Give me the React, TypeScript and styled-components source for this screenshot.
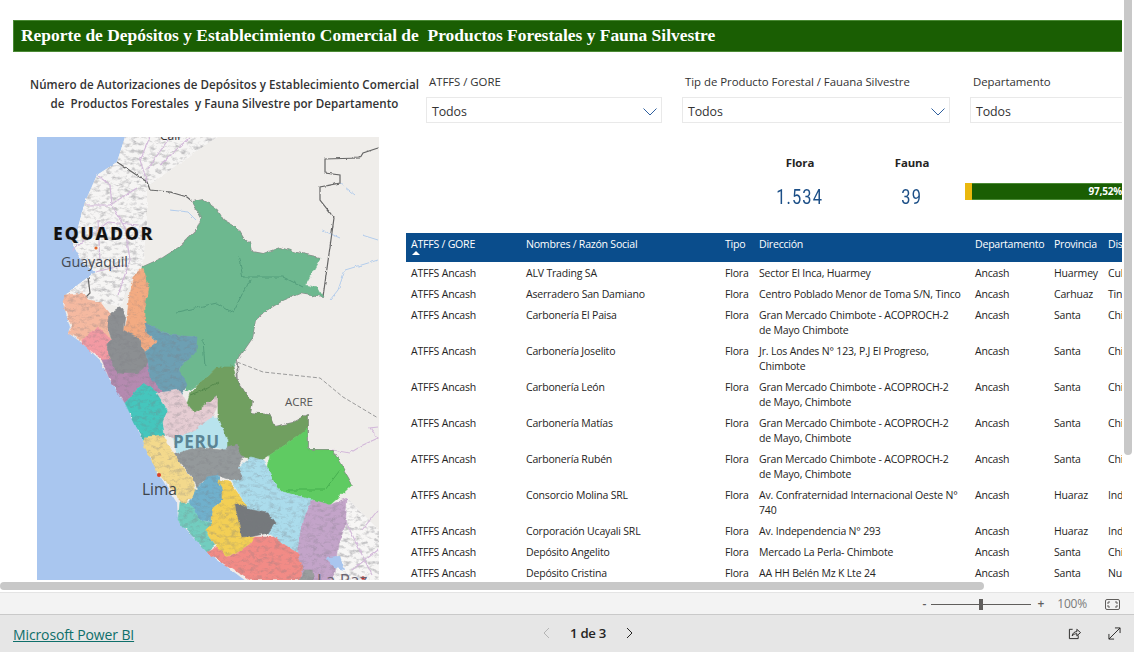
import React from "react";
import styled, { createGlobalStyle } from "styled-components";

const Global = createGlobalStyle`
  html, body { margin: 0; padding: 0; background: #fff; overflow: hidden; }
  * { box-sizing: border-box; }
`;
const UI = `"Open Sans", "Noto Sans", sans-serif`;

const Shell = styled.div`
  width: 1134px; height: 652px; display: flex; flex-direction: column; overflow: hidden;
  font-family: ${UI}; color: #252423;
`;
const Viewport = styled.main`
  position: relative; height: 592px; flex: none; overflow: hidden; background: #fff;
`;
const Canvas = styled.div`
  width: 1122px; height: 580px; margin-left: 13px; padding-top: 20px; overflow: hidden;
  display: flex; flex-direction: column;
`;
const TitleBar = styled.h1`
  margin: 0; height: 32px; flex: none; display: flex; align-items: center; padding-left: 7px; width: 1109px;
  background: #1a5e03; border: 1px solid #4a8a35; border-width: 1px 0 1px 1px;
  color: #fff; font: bold 17.45px/1 "Liberation Serif", serif; white-space: pre;
`;
const Body = styled.div`
  flex: 1; min-height: 0; display: grid; grid-template-columns: 393px 716px;
`;
const LeftColumn = styled.section`
  display: flex; flex-direction: column; min-height: 0;
`;
const MapCaption = styled.h2`
  margin: 23px 0 0 14px; width: 395px; height: 62px; text-align: center; white-space: pre; flex: none;
  font: 600 11.6px/19px ${UI}; color: #333; letter-spacing: 0.05px;
`;
const MapFrame = styled.svg`
  display: block; width: 342px; height: 443px; margin-left: 24px; flex: none;
`;
const RightColumn = styled.section`
  display: flex; flex-direction: column; min-width: 0; overflow: hidden;
`;
const Filters = styled.div`
  display: grid; grid-template-columns: 236px 268px 200px; column-gap: 20px; padding: 21px 0 0 20px; height: 71px; width: 760px; flex: none;
`;
const Filter = styled.div`
  display: flex; flex-direction: column;
`;
const FilterLabel = styled.label<{ $inset: number }>`
  font: 11.4px/18px ${UI}; color: #333; height: 24px; padding-left: ${(p) => p.$inset}px; letter-spacing: -0.03px; white-space: nowrap;
`;
const FilterBox = styled.div`
  height: 26px; border: 1px solid #e9e9e9; display: flex; align-items: center; justify-content: space-between;
  padding: 4px 4px 0 5px; font: 12.4px/16px ${UI}; color: #333; letter-spacing: -0.1px;
`;
const Kpis = styled.div`
  height: 110px; display: flex; width: 760px; flex: none;
`;
const Kpi = styled.div<{ $ml: number }>`
  width: 80px; flex: none; margin-left: ${(p) => p.$ml}px; text-align: center; padding-top: 32px;
`;
const KpiLabel = styled.div`
  font: 700 11.4px/16px ${UI}; color: #252423; letter-spacing: -0.1px;
`;
const KpiValue = styled.div`
  margin-top: 14px; display: inline-block; transform: scaleX(0.82);
  font: 400 20px/24px "Roboto", ${UI}; color: #1c4f87; letter-spacing: 1.4px;
`;
const Gauge = styled.div`
  margin: 60px 0 0 13px; height: 17px; width: 200px; display: flex; flex: none;
`;
const GaugeFlora = styled.div`
  width: 7px; background: #eab80e;
`;
const GaugeFauna = styled.div`
  width: 150px; background: #1a5e03; border-top: 1px solid #4a8a35; border-bottom: 1px solid #4a8a35;
  color: #fff; font: 700 10px/15px ${UI}; text-align: right; white-space: nowrap; letter-spacing: -0.2px;
`;
const Table = styled.div`
  width: 760px; display: flex; flex-direction: column;
`;
const cols = "115px 199px 34px 216px 79px 54px 63px";
const HeadRow = styled.div`
  display: grid; grid-template-columns: ${cols}; height: 29px; background: #0a4d8c; color: #fff;
  font: 10.6px/15px ${UI}; letter-spacing: -0.25px;
`;
const HeadCell = styled.div`
  padding: 4px 0 0 5px; white-space: nowrap; overflow: hidden;
`;
const SortArrow = styled.div`
  width: 0; height: 0; margin: -1px 0 0 1px; border-left: 4px solid transparent; border-right: 4px solid transparent; border-bottom: 4px solid #fff;
`;
const Row = styled.div`
  display: grid; grid-template-columns: ${cols}; font: 10.5px/15px ${UI}; color: #252423; letter-spacing: -0.18px;
`;
const Cell = styled.div`
  padding: 4px 0 2px 5px; white-space: pre; overflow: hidden;
`;
const ScrollV = styled.div`
  position: absolute; right: 2px; top: 0; width: 8px; height: 455px; background: #c8c8c8; border-radius: 0 0 4px 4px;
`;
const ScrollH = styled.div`
  position: absolute; left: 0; top: 582px; width: 984px; height: 8px; background: #c8c8c8; border-radius: 4px;
`;
const ZoomBar = styled.div`
  height: 23px; flex: none; background: #f3f3f3; border-bottom: 1px solid #c9c9c9; border-top: 1px solid #e4e4e4;
  display: flex; align-items: center; justify-content: flex-end; padding: 1px 14px 0 0; color: #605e5c; font: 12px/1 ${UI};
`;
const ZoomSign = styled.span<{ $ml: number }>`
  margin-left: ${(p) => p.$ml}px; font: 600 12px/1 ${UI}; color: #605e5c;
`;
const Slider = styled.div`
  position: relative; width: 100px; height: 1px; margin-left: 5px; background: #605e5c;
`;
const Thumb = styled.div`
  position: absolute; left: 48px; top: -5px; width: 4px; height: 11px; background: #605e5c;
`;
const ZoomPct = styled.span`
  margin-left: 13px; color: #7a7a7a; letter-spacing: -0.2px;
`;
const FitIcon = styled.svg`
  margin-left: 18px; display: block;
`;
const Footer = styled.footer`
  flex: 1; background: #e6e6e6; display: grid; grid-template-columns: 1fr auto 1fr; align-items: center; padding: 0 13px;
`;
const BrandLink = styled.a`
  color: #0e6f6a; text-decoration: underline; font: 14px/1 ${UI}; letter-spacing: -0.12px;
`;
const Pager = styled.nav`
  display: flex; align-items: center; gap: 20px; font: 600 13.2px/1 ${UI}; color: #252423; letter-spacing: -0.3px; margin-left: 42px;
`;
const Tools = styled.div`
  display: flex; justify-content: flex-end; gap: 27px;
`;
const MapText = styled.text<{ $size: number; $weight?: number; $ls?: number }>`
  font-family: ${UI}; font-size: ${(p) => p.$size}px; font-weight: ${(p) => p.$weight ?? 400}; letter-spacing: ${(p) => p.$ls ?? 0}px;
`;

type R = [string, string, string, string];
const rows: R[] = [
  ["ALV Trading SA", "Sector El Inca, Huarmey", "Huarmey", "Culebras"],
  ["Aserradero San Damiano", "Centro Poblado Menor de Toma S/N, Tinco", "Carhuaz", "Tinco"],
  ["Carbonería El Paisa", "Gran Mercado Chimbote - ACOPROCH-2\nde Mayo Chimbote", "Santa", "Chimbote"],
  ["Carbonería Joselito", "Jr. Los Andes N° 123, P.J El Progreso,\nChimbote", "Santa", "Chimbote"],
  ["Carbonería León", "Gran Mercado Chimbote - ACOPROCH-2\nde Mayo, Chimbote", "Santa", "Chimbote"],
  ["Carbonería Matías", "Gran Mercado Chimbote - ACOPROCH-2\nde Mayo, Chimbote", "Santa", "Chimbote"],
  ["Carbonería Rubén", "Gran Mercado Chimbote - ACOPROCH-2\nde Mayo, Chimbote", "Santa", "Chimbote"],
  ["Consorcio Molina SRL", "Av. Confraternidad Internacional Oeste N°\n740", "Huaraz", "Independencia"],
  ["Corporación Ucayali SRL", "Av. Independencia N° 293", "Huaraz", "Independencia"],
  ["Depósito Angelito", "Mercado La Perla- Chimbote", "Santa", "Chimbote"],
  ["Depósito Cristina", "AA HH Belén Mz K Lte 24", "Santa", "Nuevo Chimbote"],
];

const Chevron = () => (
  <svg width="14" height="8" viewBox="0 0 14 8" fill="none">
    <path d="M0.5 0.5 L7 7 L13.5 0.5" stroke="#2f5f9e" strokeWidth="1" />
  </svg>
);

const regions: [string, string, boolean][] = [
  ["#6db88f", "193,202 203,200 217,210 223,220 237,228 243,238 250,243 252,252 263,254 280,248 297,253 320,258 305,285 318,288 323,297 300,293 283,300 263,312 255,320 252,338 237,360 233,367 217,367 200,383 187,392 180,370 185,360 197,337 170,335 145,323 145,310 143,267 163,258 180,247 197,230 202,218", false],
  ["#f3ab82", "143,268 149,287 148,293 145,307 145,323 147,333 158,342 145,352 137,337 123,330 127,317 130,290 133,277", true],
  ["#f5b9a0", "65,295 83,293 88,300 100,302 110,315 108,330 112,340 108,343 97,327 82,340 68,333 72,327 63,303", true],
  ["#f39aa3", "97,327 112,340 107,347 110,360 102,360 82,343 82,340", true],
  ["#b58ab0", "102,360 110,380 125,403 143,383 158,393 163,392 150,375 148,360 140,358", true],
  ["#8c8f92", "120,307 125,315 123,330 137,337 145,352 148,360 145,367 137,373 117,372 110,360 107,347 112,340 108,327 110,313", true],
  ["#6d9fb3", "145,323 170,335 197,337 196,353 185,360 180,370 187,385 180,397 163,392 150,377 148,360 145,352 158,342 147,333", true],
  ["#45c6bd", "143,383 158,393 168,410 163,423 165,435 153,445 143,440 125,403", true],
  ["#e6cdd3", "157,393 180,390 187,403 195,413 207,403 217,395 218,405 212,417 193,432 173,438 165,435 163,422 168,410", true],
  ["#6f9f60", "217,367 233,367 238,383 252,402 250,413 270,415 275,427 293,423 308,415 308,428 297,437 270,455 262,460 243,457 227,450 227,440 218,417 218,395 207,403 195,413 187,403 190,393 200,383", false],
  ["#5ecb62", "307,428 308,450 332,450 352,485 330,505 313,500 283,492 275,485 267,467 270,455 297,437", false],
  ["#b8e3ed", "173,438 193,432 212,417 218,417 227,440 227,450 217,448 197,447 177,455", false],
  ["#94999b", "173,455 197,447 220,450 237,445 243,457 238,468 243,478 237,482 217,475 203,480 197,488 193,477 180,463", true],
  ["#f3d98c", "145,437 163,435 173,453 182,467 193,478 196,495 182,505 175,493 158,473 143,443", true],
  ["#6fb0cc", "197,488 207,477 218,475 223,488 223,500 213,508 212,522 200,520 190,503", true],
  ["#f3cf55", "218,480 230,482 248,508 235,503 242,538 255,537 247,548 230,555 227,557 217,547 205,530 212,523 213,508 223,500 223,488", true],
  ["#72cdbf", "180,503 190,503 200,520 212,523 205,530 215,545 207,552 178,520", true],
  ["#abdcec", "232,482 243,478 238,468 250,457 262,460 267,467 275,485 283,492 313,500 303,520 297,553 282,543 275,537 268,533 275,523 267,512 248,508", true],
  ["#75797c", "235,503 248,508 267,512 275,523 268,533 250,537 242,538", true],
  ["#c3a4c9", "313,500 330,505 347,498 345,527 338,543 335,573 330,580 300,580 303,567 297,553 303,520", true],
  ["#f28b86", "207,552 217,547 227,557 247,548 255,537 275,537 282,543 297,553 303,567 300,580 250,580", true],
  ["#9a9d9e", "300,580 305,570 312,570 314,580", true],
];

const reliefN = "125,137 117,162 97,175 85,202 80,220 73,245 83,263 95,272 67,293 100,302 120,307 133,277 143,263 147,223 147,187 177,165 217,137";
const reliefS = "347,498 379,530 379,580 335,580 338,543";

const PeruMap = () => (
  <MapFrame viewBox="37 137 342 443" role="img" aria-label="Mapa del Perú por departamento">
    <defs>
      <filter id="rough" x="-5%" y="-5%" width="110%" height="110%">
        <feTurbulence type="fractalNoise" baseFrequency="0.14" numOctaves="3" seed="4" result="n" />
        <feDisplacementMap in="SourceGraphic" in2="n" scale="4.5" xChannelSelector="R" yChannelSelector="G" />
      </filter>
      <filter id="wiggle" x="-5%" y="-5%" width="110%" height="110%">
        <feTurbulence type="fractalNoise" baseFrequency="0.2" numOctaves="2" seed="9" result="n" />
        <feDisplacementMap in="SourceGraphic" in2="n" scale="3" xChannelSelector="R" yChannelSelector="G" />
      </filter>
      <filter id="terrain" x="0" y="0" width="100%" height="100%">
        <feTurbulence type="fractalNoise" baseFrequency="0.16 0.26" numOctaves="4" seed="7" />
        <feColorMatrix type="matrix" values="0 0 0 0 0.2  0 0 0 0 0.2  0 0 0 0 0.22  3.2 0 0 0 -1.5" />
      </filter>
      <clipPath id="reliefClip">
        <polygon points={reliefN} />
        <polygon points={reliefS} />
      </clipPath>
      <clipPath id="andesClip">
        {regions.filter((r) => r[2]).map(([, p]) => <polygon key={p} points={p} />)}
      </clipPath>
    </defs>
    <rect x="37" y="137" width="342" height="443" fill="#a9c6ef" />
    <g filter="url(#wiggle)">
      <path d="M125 137 L117 162 L97 175 L85 202 L80 220 L73 245 L83 263 L95 272 L67 293 L63 303 L70 327 L68 333 L82 343 L100 360 L110 380 L125 403 L143 440 L158 473 L177 503 L178 520 L207 552 L250 584 L385 584 L385 130 L125 130 Z" fill="#efedea" />
      <polygon points={reliefN} fill="#f6f5f4" />
      <polygon points={reliefS} fill="#f7f6f5" />
    </g>
    <g clipPath="url(#reliefClip)">
      <rect x="37" y="137" width="342" height="443" filter="url(#terrain)" opacity="0.42" />
    </g>
    <g fill="none" stroke="#d3b9da" strokeWidth="1.1" filter="url(#wiggle)">
      <path d="M97 175 L110 185 L112 205 L125 228 L130 260 L118 295" />
      <path d="M85 205 L110 205 L137 188 M72 250 L108 222 L138 225 M95 272 L125 265 M98 220 L100 262" />
      <path d="M150 137 L140 160 L147 182 M170 137 L147 170 M190 137 L160 165" />
      <path d="M378 427 L370 428 L378 438 L363 445 L350 453 L332 450" />
      <path d="M362 530 L378 510 M352 570 L378 550 M345 520 L372 575" />
    </g>
    <g fill="none" stroke="#b4cdec" strokeWidth="1" filter="url(#wiggle)">
      <path d="M170 210 L188 212 L196 220 M340 183 L355 195 M322 230 L340 238 M330 300 L338 290 L345 270 L378 260 M378 240 L362 235 M165 260 L175 270" />
    </g>
    <path d="M237 362 L263 372 L320 378 L343 397 L378 418" fill="none" stroke="#9b9b9b" strokeWidth="1" strokeDasharray="4 2" />
    <g fill="none" stroke="#666" strokeWidth="1.2" filter="url(#wiggle)">
      <path d="M378 148 L363 153 L360 158 L325 159 L325 173 L340 175 L340 183 L320 187 L320 200 L334 218 L323 297" />
      <path d="M117 162 L147 182 L150 190 L170 192 L187 197 L193 202" />
      <path d="M88 277 L90 293 L85 298" />
    </g>
    <g filter="url(#rough)">
      <g fill="none" stroke="#6d6d6d" strokeWidth="1.8" opacity="0.75">
        <path d="M143 267 L163 258 L180 247 L197 230 L202 218 L193 202 L203 200 L217 210 L223 220 L237 228 L243 238 L250 243 L252 252 L263 254 L280 248 L297 253 L320 258 M323 297 L300 293 L283 300 L263 312 L255 320 L252 338 L237 360 L238 383 L252 402 L250 413 L270 415 L275 427 L293 423 L308 415 L308 450 L332 450 L352 485" />
      </g>
      {regions.map(([c, p]) => (
        <polygon key={p} points={p} fill={c} stroke={c} strokeWidth="0.6" />
      ))}
      <g clipPath="url(#andesClip)">
        <rect x="37" y="260" width="342" height="320" filter="url(#terrain)" opacity="0.3" />
      </g>
      <g fill="none" stroke="#4f9a78" strokeWidth="0.9">
        <path d="M238 255 L243 277 L257 277 L283 277 L303 287 M177 312 L217 303 L233 313 L250 280 M203 340 L205 367" />
      </g>
      <g fill="none" stroke="#4f8447" strokeWidth="0.8">
        <path d="M190 395 L208 388 L218 382" />
      </g>
      <g fill="none" stroke="#40a84a" strokeWidth="0.8">
        <path d="M286 490 L325 490 L340 470" />
      </g>
    </g>
    <path d="M325 557 L340 556 L345 570 L335 568 Z" fill="#a9c6ef" filter="url(#wiggle)" />
    <circle cx="96" cy="248" r="1.6" fill="#e0662a" />
    <circle cx="159" cy="475" r="2" fill="#d8402a" />
    <circle cx="363" cy="578" r="1.8" fill="#c0302a" />
    <MapText x="160" y="139.5" $size={12} fill="#333">Cali</MapText>
    <MapText x="53" y="240" $size={18} $weight={800} $ls={1.5} fill="#111" stroke="#fff" strokeWidth="0.2">EQUADOR</MapText>
    <MapText x="61" y="267" $size={14.3} fill="#444a52">Guayaquil</MapText>
    <MapText x="285" y="406" $size={11.5} fill="#555">ACRE</MapText>
    <MapText x="173" y="448" $size={17} $weight={700} $ls={0.6} fill="#5b8494">PERU</MapText>
    <MapText x="142" y="495" $size={15.5} fill="#3d434a">Lima</MapText>
    <MapText x="317" y="586" $size={17} fill="#6a6470">La Paz</MapText>
  </MapFrame>
);

export default function App() {
  return (
    <>
      <Global />
      <Shell>
        <Viewport>
          <Canvas>
            <TitleBar>{"Reporte de Depósitos y Establecimiento Comercial de  Productos Forestales y Fauna Silvestre"}</TitleBar>
            <Body>
              <LeftColumn>
                <MapCaption>{"Número de Autorizaciones de Depósitos y Establecimiento Comercial\nde  Productos Forestales  y Fauna Silvestre por Departamento"}</MapCaption>
                <PeruMap />
              </LeftColumn>
              <RightColumn>
                <Filters>
                  <Filter>
                    <FilterLabel $inset={3}>ATFFS / GORE</FilterLabel>
                    <FilterBox>Todos<Chevron /></FilterBox>
                  </Filter>
                  <Filter>
                    <FilterLabel $inset={3}>Tip de Producto Forestal / Fauana Silvestre</FilterLabel>
                    <FilterBox>Todos<Chevron /></FilterBox>
                  </Filter>
                  <Filter>
                    <FilterLabel $inset={3}>Departamento</FilterLabel>
                    <FilterBox>Todos<Chevron /></FilterBox>
                  </Filter>
                </Filters>
                <Kpis>
                  <Kpi $ml={354}>
                    <KpiLabel>Flora</KpiLabel>
                    <KpiValue>1.534</KpiValue>
                  </Kpi>
                  <Kpi $ml={32}>
                    <KpiLabel>Fauna</KpiLabel>
                    <KpiValue>39</KpiValue>
                  </Kpi>
                  <Gauge>
                    <GaugeFlora />
                    <GaugeFauna>97,52%</GaugeFauna>
                  </Gauge>
                </Kpis>
                <Table>
                  <HeadRow>
                    <HeadCell>ATFFS / GORE<SortArrow /></HeadCell>
                    <HeadCell>Nombres / Razón Social</HeadCell>
                    <HeadCell>Tipo</HeadCell>
                    <HeadCell>Dirección</HeadCell>
                    <HeadCell>Departamento</HeadCell>
                    <HeadCell>Provincia</HeadCell>
                    <HeadCell>Distrito</HeadCell>
                  </HeadRow>
                  {rows.map((r) => (
                    <Row key={r[0]}>
                      <Cell>ATFFS Ancash</Cell>
                      <Cell>{r[0]}</Cell>
                      <Cell>Flora</Cell>
                      <Cell>{r[1]}</Cell>
                      <Cell>Ancash</Cell>
                      <Cell>{r[2]}</Cell>
                      <Cell>{r[3]}</Cell>
                    </Row>
                  ))}
                </Table>
              </RightColumn>
            </Body>
          </Canvas>
          <ScrollV />
          <ScrollH />
        </Viewport>
        <ZoomBar>
          <ZoomSign $ml={0}>-</ZoomSign>
          <Slider><Thumb /></Slider>
          <ZoomSign $ml={6}>+</ZoomSign>
          <ZoomPct>100%</ZoomPct>
          <FitIcon width="15" height="11" viewBox="0 0 15 11" fill="none" stroke="#605e5c">
            <rect x="0.5" y="0.5" width="14" height="10" rx="1.5" />
            <path d="M3 5 V3 H5 M10 3 H12 V5 M12 6 V8 H10 M5 8 H3 V6" />
          </FitIcon>
        </ZoomBar>
        <Footer>
          <div><BrandLink href="#">Microsoft Power BI</BrandLink></div>
          <Pager>
            <svg width="8" height="12" viewBox="0 0 8 12" fill="none" stroke="#b5b5b5"><path d="M7 1 L2 6 L7 11" /></svg>
            <span>1 de 3</span>
            <svg width="8" height="12" viewBox="0 0 8 12" fill="none" stroke="#252423"><path d="M1 1 L6 6 L1 11" /></svg>
          </Pager>
          <Tools>
            <svg width="13" height="13" viewBox="0 0 14 14" fill="none" stroke="#252423">
              <path d="M5 2.5 H1.5 V12.5 H11 V9" />
              <path d="M4.5 9.5 C5 6.5 7 5 9.5 5 V2.5 L13.5 6 L9.5 9.5 V7.2 C7.5 7.2 6 8 4.5 9.5 Z" />
            </svg>
            <svg width="13" height="13" viewBox="0 0 14 14" fill="none" stroke="#252423">
              <path d="M1 13 L13 1 M7.5 1 H13 V6.5 M1 7.5 V13 H6.5" />
            </svg>
          </Tools>
        </Footer>
      </Shell>
    </>
  );
}
